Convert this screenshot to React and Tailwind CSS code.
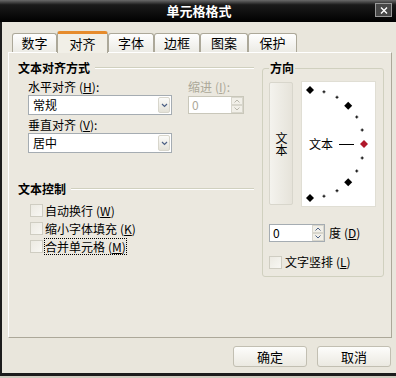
import React from 'react'

const cjk = "font-['Noto_Sans_CJK_SC','Liberation_Sans',sans-serif]"

function Key({ k }) {
  return (
    <span className="ml-[3px]">
      (<u>{k}</u>)
    </span>
  )
}

function Chevron() {
  return (
    <svg width="7" height="5" viewBox="0 0 7 5">
      <path d="M1 1 L3.5 3.5 L6 1" stroke="#4d6185" strokeWidth="1.2" fill="none" />
    </svg>
  )
}

function Select({ value }) {
  return (
    <div className="flex h-[20px] w-[144px] items-center border border-[#a5acb2] bg-white">
      <span className="flex-1 pl-[4px] text-[12px] leading-[16px]">{value}</span>
      <div className="mr-[1px] flex h-[16px] w-[12px] items-center justify-center rounded-[2px] border border-[#d8d6cc] bg-[linear-gradient(#fbfbf9,#e4e2d8)]">
        <Chevron />
      </div>
    </div>
  )
}

function Spin({ disabled, value, w }) {
  return (
    <div className={`flex h-[18px] items-stretch border bg-white ${w} ${disabled ? 'border-[#c9c7ba]' : 'border-[#a5acb2]'}`}>
      <span className={`flex-1 pl-[3px] text-[12px] leading-[16px] ${disabled ? 'text-[#aca899]' : 'text-black'}`}>{value}</span>
      <div className="flex w-[12px] flex-col">
        <div className="flex flex-1 items-center justify-center border border-[#d8d6cc] bg-[#f1efe8]">
          <svg width="6" height="4" viewBox="0 0 6 4"><path d="M0.5 3.5 L3 1 L5.5 3.5" stroke={disabled ? '#b8b6ab' : '#4d6185'} fill="none" /></svg>
        </div>
        <div className="flex flex-1 items-center justify-center border border-[#d8d6cc] bg-[#f1efe8]">
          <svg width="6" height="4" viewBox="0 0 6 4"><path d="M0.5 0.5 L3 3 L5.5 0.5" stroke={disabled ? '#b8b6ab' : '#4d6185'} fill="none" /></svg>
        </div>
      </div>
    </div>
  )
}

function Check({ label, k, focus }) {
  return (
    <div className="flex h-[18px] items-center">
      <div className="h-[13px] w-[13px] border border-[#cfcdc2] bg-[linear-gradient(135deg,#eceae2,#f8f7f3)]" />
      <span className={`ml-[2px] text-[12px] leading-[15px] ${focus ? 'outline outline-1 outline-dotted outline-black' : ''}`}>
        {label}
        <Key k={k} />
      </span>
    </div>
  )
}

function Dial() {
  const pts = []
  for (let a = -90; a <= 90; a += 15) {
    const r = (a * Math.PI) / 180
    pts.push({ a, x: 8 + 54 * Math.cos(r), y: 62 + 54 * Math.sin(r) })
  }
  return (
    <svg width="73" height="124" viewBox="0 0 73 124">
      {pts.map(p =>
        p.a % 45 === 0 ? (
          <polygon
            key={p.a}
            points={`${p.x},${p.y - 4} ${p.x + 4},${p.y} ${p.x},${p.y + 4} ${p.x - 4},${p.y}`}
            fill={p.a === 0 ? '#b0162a' : '#000'}
          />
        ) : (
          <g key={p.a} fill="#000">
            <rect x={p.x - 1.5} y={p.y - 0.5} width="3" height="1" />
            <rect x={p.x - 0.5} y={p.y - 1.5} width="1" height="3" />
          </g>
        )
      )}
      <text x="7" y="67" fontSize="12" fontFamily="Noto Sans CJK SC, sans-serif" fill="#000">文本</text>
      <rect x="37" y="62" width="15" height="1" fill="#000" />
    </svg>
  )
}

function Tab({ label, w, active }) {
  if (active) {
    return (
      <div className={`relative z-10 -mb-[1px] flex h-[22px] ${w} items-center justify-center rounded-t-[3px] border-x border-t-[3px] border-x-[#aca899] border-t-[#e68b2c] bg-[#f1efe7] text-[13px]`}>
        {label}
      </div>
    )
  }
  return (
    <div className={`flex h-[19px] ${w} items-center justify-center rounded-t-[3px] border-x border-t border-[#aca899] bg-[linear-gradient(#fefefe,#ecebe5)] text-[13px]`}>
      {label}
    </div>
  )
}

export default function App() {
  return (
    <div className={`h-[378px] w-[396px] bg-[#cfcbbf] text-black ${cjk}`}>
      <div className="flex h-[376px] flex-col border-b-[3px] border-[#1c1c1c] bg-[#e9e6dc]">
        {/* title bar */}
        <div className="relative flex h-[22px] items-center justify-center bg-[linear-gradient(#6a6a6a,#1a1a1a_22%,#000)]">
          <span className="pl-[2px] text-[13px] font-bold text-white">单元格格式</span>
          <div className="absolute right-[4px] top-[3px] flex h-[14px] w-[17px] items-center justify-center border border-[#9a9a9a] bg-[#474747]">
            <svg width="8" height="7" viewBox="0 0 8 7">
              <path d="M1 0.5 L7 6.5 M7 0.5 L1 6.5" stroke="#fff" strokeWidth="1.4" />
            </svg>
          </div>
        </div>

        <div className="flex flex-1 flex-col border-l-[2px] border-[#1c1c1c]">
          {/* tabs */}
          <div className="flex h-[30px] items-end pl-[10px]">
            <Tab label="数字" w="w-[45px]" />
            <Tab label="对齐" w="w-[51px]" active />
            <Tab label="字体" w="w-[46px]" />
            <Tab label="边框" w="w-[46px]" />
            <Tab label="图案" w="w-[48px]" />
            <Tab label="保护" w="w-[49px]" />
          </div>

          {/* panel */}
          <div className="ml-[6px] flex h-[286px] w-[384px] border border-b-[#aca899] border-l-white border-r-[#aca899] border-t-white bg-[#ebe8df] pl-[9px]">
            {/* left column */}
            <div className="flex w-[236px] flex-col">
              <div className="mt-[7px] flex h-[16px] items-center">
                <span className="text-[12px] font-bold leading-[16px]">文本对齐方式</span>
                <div className="ml-[5px] h-[2px] flex-1 border-t border-b border-t-[#d0d0bf] border-b-white" />
              </div>
              <div className="flex pl-[10px]">
                <div className="flex flex-col">
                  <div className="mt-[3px] h-[16px] text-[12px] leading-[16px]">
                    水平对齐<Key k="H" />:
                  </div>
                  <Select value="常规" />
                  <div className="mt-[2px] h-[16px] text-[12px] leading-[16px]">
                    垂直对齐<Key k="V" />:
                  </div>
                  <Select value="居中" />
                </div>
                <div className="ml-[16px] flex flex-col">
                  <div className="mt-[3px] h-[16px] text-[12px] leading-[16px] text-[#aca899]">
                    缩进<Key k="I" />:
                  </div>
                  <div className="mt-[1px]">
                    <Spin disabled value="0" w="w-[56px]" />
                  </div>
                </div>
              </div>

              <div className="mt-[28px] flex h-[16px] items-center">
                <span className="text-[12px] font-bold leading-[16px]">文本控制</span>
                <div className="ml-[5px] h-[2px] flex-1 border-t border-b border-t-[#d0d0bf] border-b-white" />
              </div>
              <div className="mt-[4px] flex flex-col pl-[12px]">
                <Check label="自动换行" k="W" />
                <Check label="缩小字体填充" k="K" />
                <Check label="合并单元格" k="M" focus />
              </div>
            </div>

            {/* direction group */}
            <div className="ml-[8px] mt-[15px] flex h-[209px] w-[122px] flex-col rounded-[3px] border border-[#d0d0bf] pl-[6px]">
              <div className="-mt-[9px] h-[16px] w-fit bg-[#ebe8df] px-[1px] text-[12px] font-bold leading-[16px]">方向</div>
              <div className="mt-[5px] flex items-start">
                <div className="mt-[1px] flex h-[123px] w-[24px] items-center justify-center rounded-[2px] border border-[#d8d6cc] bg-[linear-gradient(90deg,#f4f3ee,#e6e3da)] text-[12px]">
                  <span className="[writing-mode:vertical-rl] [text-orientation:upright]">文本</span>
                </div>
                <div className="ml-[8px] border border-[#e0ded4] bg-white">
                  <Dial />
                </div>
              </div>
              <div className="mt-[17px] flex items-center">
                <Spin value="0" w="w-[56px]" />
                <span className="ml-[4px] text-[12px] leading-[16px]">
                  度<Key k="D" />
                </span>
              </div>
              <div className="mt-[12px] flex h-[16px] items-center">
                <div className="h-[13px] w-[13px] border border-[#cfcdc2] bg-[linear-gradient(135deg,#eceae2,#f8f7f3)]" />
                <span className="ml-[3px] text-[12px] leading-[16px]">
                  文字竖排<Key k="L" />
                </span>
              </div>
            </div>
          </div>

          {/* buttons */}
          <div className="mt-[8px] flex justify-end gap-[10px] pr-[5px]">
            <button className="h-[21px] w-[74px] rounded-[3px] border border-[#c2bfb2] bg-[linear-gradient(#fdfdfb,#ebe9e1)] text-[13px] leading-[16px]">确定</button>
            <button className="h-[21px] w-[74px] rounded-[3px] border border-[#c2bfb2] bg-[linear-gradient(#fdfdfb,#ebe9e1)] text-[13px] leading-[16px]">取消</button>
          </div>
        </div>
      </div>
    </div>
  )
}
